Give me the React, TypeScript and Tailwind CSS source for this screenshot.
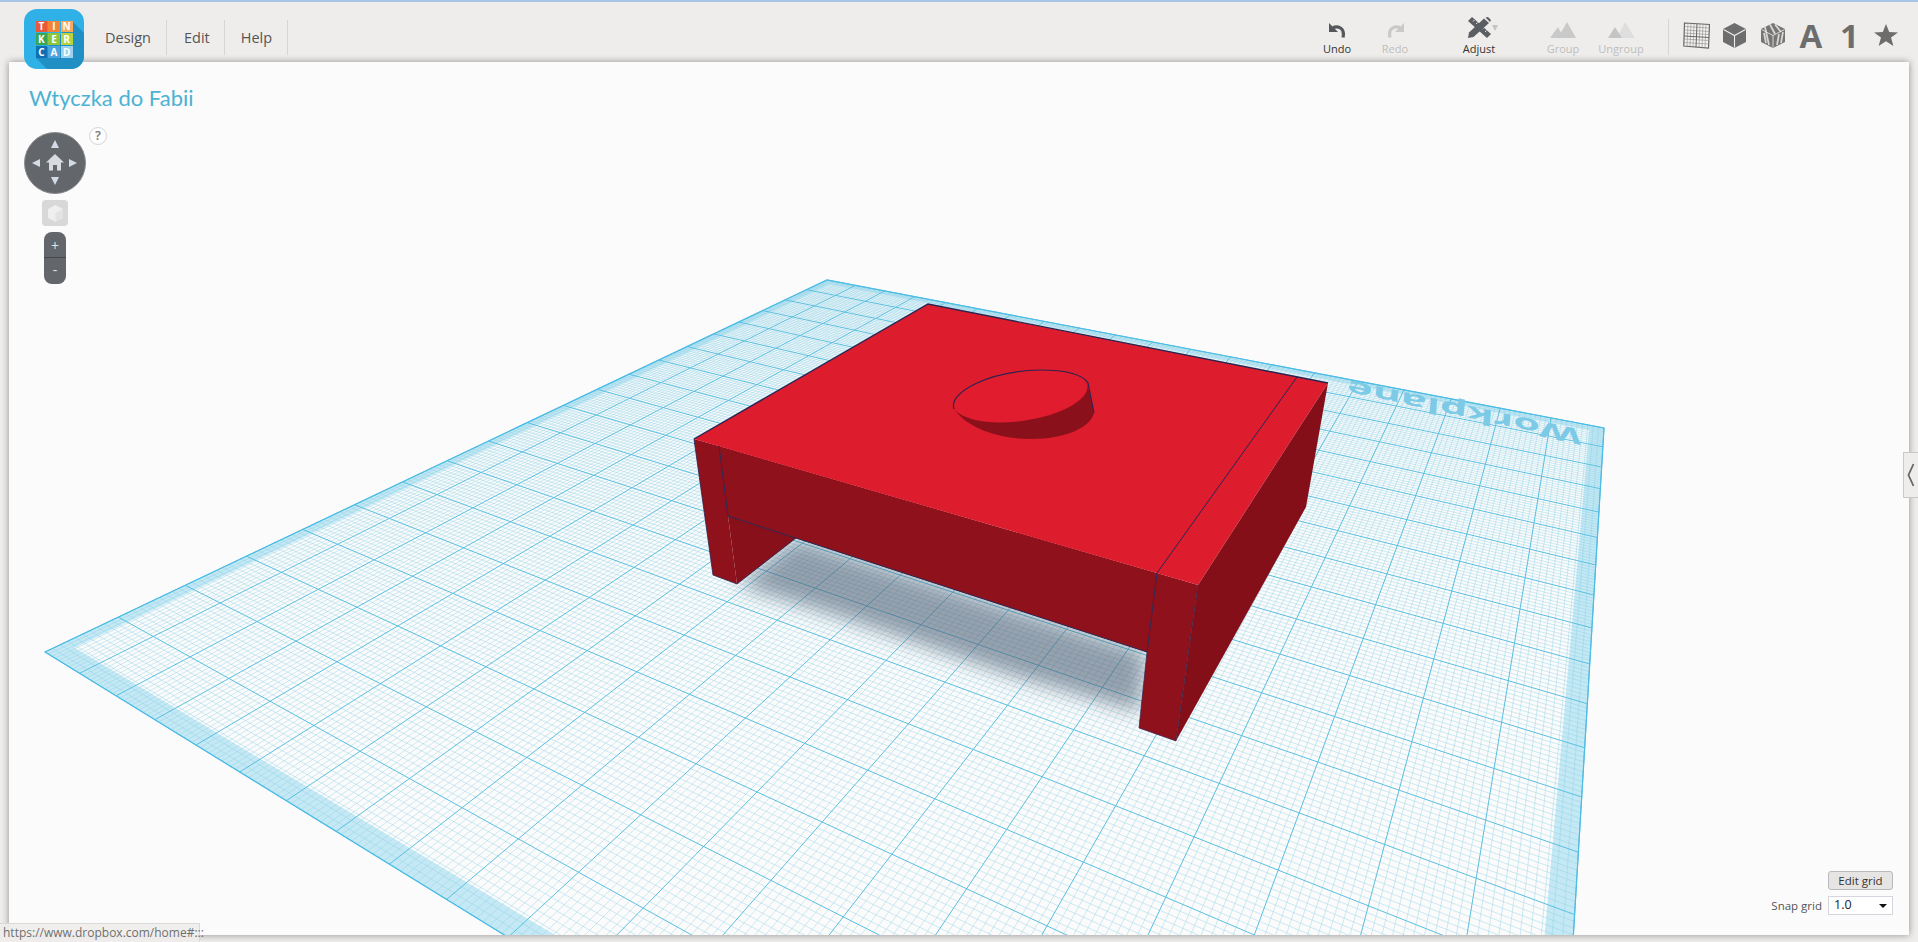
import type { ReactNode } from "react";

// workplane corners on the page, found from the grid ticks in the screenshot
const P00 = [45, 652];
const P10 = [1535, 1570];
const P01 = [827, 280];
const P11 = [1604, 428];

function makeProjector() {
  const dx1 = P10[0] - P11[0];
  const dx2 = P01[0] - P11[0];
  const sx = P00[0] - P10[0] + P11[0] - P01[0];
  const dy1 = P10[1] - P11[1];
  const dy2 = P01[1] - P11[1];
  const sy = P00[1] - P10[1] + P11[1] - P01[1];
  const det = dx1 * dy2 - dx2 * dy1;
  const g = (sx * dy2 - dx2 * sy) / det;
  const h = (dx1 * sy - sx * dy1) / det;
  return (s: number, t: number) => {
    const w = 1 + g * s + h * t;
    const x = ((P10[0] * (1 + g) - P00[0]) * s + (P01[0] * (1 + h) - P00[0]) * t + P00[0]) / w;
    const y = ((P10[1] * (1 + g) - P00[1]) * s + (P01[1] * (1 + h) - P00[1]) * t + P00[1]) / w;
    return `${x.toFixed(1)} ${y.toFixed(1)}`;
  };
}

const project = makeProjector();

function gridPath(step: number, skip: number) {
  let d = "";
  for (let i = 0; i <= 200; i += step) {
    if (skip && i % skip === 0) continue;
    const k = i / 200;
    d += `M${project(k, 0)}L${project(k, 1)}M${project(0, k)}L${project(1, k)}`;
  }
  return d;
}

const band = 0.0135;
const bandPath =
  `M${project(0, 0)}L${project(1, 0)}L${project(1, 1)}L${project(0, 1)}Z` +
  `M${project(band, band)}L${project(1 - band, band)}L${project(1 - band, 1 - band)}L${project(band, 1 - band)}Z`;

function Scene() {
  return (
    <svg className="absolute inset-0" width="1900" height="873" viewBox="9 62 1900 873">
      <defs>
        <filter id="soft" x="-20%" y="-20%" width="140%" height="140%">
          <feGaussianBlur stdDeviation="10" />
        </filter>
      </defs>
      {/* workplane */}
      <path d={bandPath} fill="#c4e8f4" fillRule="evenodd" />
      <path d={gridPath(1, 10)} fill="none" stroke="#8fd0e6" strokeOpacity="0.55" strokeWidth="0.8" />
      <path d={gridPath(10, 0)} fill="none" stroke="#59bfe0" strokeWidth="1" />
      <path
        d={`M${project(0, 0)}L${project(1, 0)}L${project(1, 1)}L${project(0, 1)}Z`}
        fill="none"
        stroke="#4dbde6"
        strokeWidth="1.2"
      />
      <text
        transform="matrix(-2.15 -0.46 0.1 -1.05 1582 430)"
        fontFamily="'Open Sans', sans-serif"
        fontWeight="700"
        fontSize="20"
        fill="#7ccae6"
      >
        Workplane
      </text>

      {/* shadow on the plane */}
      <polygon
        points="738,585 796,538 1147,652 1140,712 1017,677 838,616"
        fill="#4d5f75"
        fillOpacity="0.58"
        filter="url(#soft)"
      />

      {/* legs, underside */}
      <polygon points="728,516 796,538 737,584" fill="#87101a" />
      <polygon points="1198,585 1328,383 1306,507 1176,741" fill="#850f18" />
      {/* front band */}
      <polygon points="719,446 1157,573 1147,652 728,516" fill="#8f111c" />
      <polygon points="694,439 719,446 728,516 737,584 713,575" fill="#8f111c" />
      <polygon points="1157,573 1198,585 1176,741 1139,728 1147,652" fill="#8f111c" />
      {/* top */}
      <polygon points="928,304 1328,383 1198,585 694,439" fill="#dd1c2e" />

      {/* peg */}
      <path d="M954,408 C965,428 1000,439 1030,439 C1065,439 1090,428 1094,413 L1087,383 Z" fill="#8a111b" />
      <ellipse cx="1020" cy="395" rx="68" ry="26" transform="rotate(-8 1020 395)" fill="#e01c2e" />
      <path
        d="M954,409 C948,392 990,371 1040,370 C1065,370 1082,374 1088,383 L1094,413"
        fill="none"
        stroke="#2b2350"
        strokeWidth="1.2"
      />

      {/* edges */}
      <g fill="none" stroke="#2b2350" strokeWidth="1">
        <path d="M694,439 L928,304 L1328,383" strokeWidth="1.4" />
        <path d="M1297,377 L1157,573 L1147,652" />
        <path d="M719,446 L728,516 L1147,652" />
        <path d="M694,439 L713,575 L737,584 L796,538" strokeOpacity="0.8" />
        <path d="M1147,652 L1139,728 L1176,741 L1198,585" strokeOpacity="0.7" />
      </g>
    </svg>
  );
}

function LogoCell({ letter, color }: { letter: string; color: string }) {
  return (
    <div
      className="flex items-center justify-center font-['Open_Sans',sans-serif] text-[10px] font-bold leading-none text-white"
      style={{ backgroundColor: color }}
    >
      {letter}
    </div>
  );
}

function Logo() {
  const cells = [
    ["T", "#e9583a"],
    ["I", "#f2843a"],
    ["N", "#f7a95c"],
    ["K", "#3aa655"],
    ["E", "#8cc63f"],
    ["R", "#b7d33f"],
    ["C", "#0f6fb5"],
    ["A", "#4aa3df"],
    ["D", "#9dd1ee"],
  ];
  return (
    <div className="relative z-10 mt-[7px] ml-6 flex h-[60px] w-[60px] shrink-0 items-center justify-center overflow-hidden rounded-[13px] bg-[#2fb0e6]">
      <svg className="absolute inset-0" width="60" height="60" viewBox="0 0 60 60">
        <polygon points="12,49 49,13 60,24 60,60 23,60" fill="#1f8fc4" />
      </svg>
      <div className="relative grid h-[37px] w-[37px] grid-cols-3 gap-px">
        {cells.map(([l, c]) => (
          <LogoCell key={l} letter={l} color={c} />
        ))}
      </div>
    </div>
  );
}

function MenuItem({ label, className }: { label: string; className: string }) {
  return (
    <div className={`mt-[18px] flex h-[35px] items-center border-r border-[#d8d6d3] text-[14.5px] text-[#555] ${className}`}>
      {label}
    </div>
  );
}

function ToolButton({ label, disabled, className, children }: { label: string; disabled?: boolean; className?: string; children: ReactNode }) {
  return (
    <div className={`flex w-[58px] flex-col items-center ${className ?? ""}`}>
      <div className="flex h-[21px] items-end">{children}</div>
      <div className={`mt-[4px] text-[11px] leading-[14px] ${disabled ? "text-[#bdbdbd]" : "text-[#333]"}`}>{label}</div>
    </div>
  );
}

function UndoIcon({ color, flip }: { color: string; flip?: boolean }) {
  return (
    <svg width="17" height="15" viewBox="0 0 17 15" className={flip ? "-scale-x-100" : ""}>
      <polygon points="0,0 0,9 9,9" fill={color} />
      <path d="M4,4.5 C10,2.5 16,5.5 14,14.5" fill="none" stroke={color} strokeWidth="3.2" />
    </svg>
  );
}

function AdjustIcon() {
  return (
    <svg width="23" height="21" viewBox="0 0 23 21" className="overflow-visible">
      {/* ruler */}
      <polygon points="0,4 4,0 23,17 19,21" fill="#5a5d61" />
      <path d="M5,4.5 L6.5,3 M8,7 L9.5,5.5 M11,9.7 L12.5,8.2 M14,12.4 L15.5,10.9 M17,15 L18.5,13.5" stroke="#efedeb" strokeWidth="0.9" />
      {/* pencil */}
      <polygon points="0,21 1,15.5 16,1.5 21,6 5.5,20" fill="#5a5d61" />
      <polygon points="17.5,0.5 20,0 23,3 22,5" fill="#5a5d61" />
      <polygon points="24,8 30,8 27,14" fill="#c4c4c4" />
    </svg>
  );
}

function GroupIcon() {
  return (
    <svg width="26" height="16" viewBox="0 0 26 16">
      <polygon points="0,16 8,5 14,16" fill="#c9c9c9" />
      <polygon points="8,16 17,0 26,16" fill="#c9c9c9" />
    </svg>
  );
}

function UngroupIcon() {
  return (
    <svg width="27" height="16" viewBox="0 0 27 16">
      <polygon points="9,16 17,0 27,16" fill="#dedede" />
      <polygon points="0,16 7,5 14,16" fill="#c4c4c4" />
    </svg>
  );
}

function GridIcon() {
  return (
    <svg width="27" height="27" viewBox="0 0 27 27">
      <polygon points="1.5,1 26.5,2.5 25.5,26 0.8,24" fill="#f4f2f0" stroke="#666" strokeWidth="1.2" />
      <path
        d="M5,1.2 L4,24.3 M8,1.4 L7,24.5 M11,1.6 L10,24.8 M17,2 L16,25.2 M20,2.2 L19,25.5 M23,2.4 L22,25.7 M1.4,4.5 L26.4,6 M1.3,8 L26.2,9.5 M1.2,11 L26.1,12.5 M1.1,17 L25.9,18.5 M1,20.5 L25.7,22"
        stroke="#8b8b8b"
        strokeWidth="0.6"
      />
      <path d="M14,1.8 L13,25 M1.2,14 L26,15.5" stroke="#666" strokeWidth="1" />
    </svg>
  );
}

function BoxIcon() {
  return (
    <svg width="23" height="25" viewBox="0 0 23 25">
      <polygon points="11.5,0 23,6 23,19 11.5,25 0,19 0,6" fill="#6d6d6d" />
      <path d="M0.5,6.5 L11.5,12.5 L22.5,6.5 M11.5,12.5 L11.5,24.5" fill="none" stroke="#efedeb" strokeWidth="1.1" />
    </svg>
  );
}

function StripedBoxIcon() {
  return (
    <svg width="24" height="25" viewBox="0 0 24 25">
      <polygon points="12,0 24,6 24,19 12,25 0,19 0,6" fill="#757575" />
      <path d="M4,4 L8,22 M9,1.5 L14,11 M14,1.5 L20,9 M18,11 L16,22 M22,9 L20,20 M3,10 L5,20" stroke="#d8d6d4" strokeWidth="1.8" fill="none" />
      <path d="M0.5,6.5 L12,12.5 L23.5,6.5 M12,12.5 L12,24.5" fill="none" stroke="#efedeb" strokeWidth="0.8" />
    </svg>
  );
}

function Compass() {
  return (
    <div className="absolute top-[70px] left-[15px] h-[62px] w-[62px] rounded-full border border-[#8a8c90] bg-[#63666b]">
      <svg width="60" height="60" viewBox="0 0 60 60">
        <polygon points="30,7 26,15 34,15" fill="#d3dce6" />
        <polygon points="30,52 26,44 34,44" fill="#d3dce6" />
        <polygon points="7,30 15,26 15,34" fill="#d3dce6" />
        <polygon points="52,30 44,26 44,34" fill="#d3dce6" />
        <polygon points="30,21 21,29.5 24,29.5 24,37.5 28,37.5 28,32 32,32 32,37.5 36,37.5 36,29.5 39,29.5" fill="#d9dcdf" />
      </svg>
    </div>
  );
}

export default function App() {
  return (
    <div className="relative flex h-[942px] w-[1918px] flex-col overflow-hidden border-t-2 border-[#a9c6e4] bg-[#efedeb] font-['Open_Sans',sans-serif]">
      <header className="flex h-[60px] shrink-0">
        <Logo />
        <MenuItem label="Design" className="pr-[15px] pl-[21px]" />
        <MenuItem label="Edit" className="pr-[14px] pl-[17px]" />
        <MenuItem label="Help" className="pr-[15px] pl-[16px]" />

        <div className="ml-auto flex items-start pt-[15px] pr-5">
          <ToolButton label="Undo">
            <UndoIcon color="#54585c" />
          </ToolButton>
          <ToolButton label="Redo" disabled>
            <UndoIcon color="#c9c9c9" flip />
          </ToolButton>
          <ToolButton label="Adjust" className="ml-[26px]">
            <AdjustIcon />
          </ToolButton>
          <ToolButton label="Group" disabled className="ml-[26px]">
            <GroupIcon />
          </ToolButton>
          <ToolButton label="Ungroup" disabled>
            <UngroupIcon />
          </ToolButton>
          <div className="mt-[2px] ml-[18px] h-[36px] w-px bg-[#d8d6d3]" />
          <div className="ml-[14px] flex h-[36px] items-center text-[#6d6d6d]">
            <GridIcon />
            <div className="ml-[13px]">
              <BoxIcon />
            </div>
            <div className="ml-[15px]">
              <StripedBoxIcon />
            </div>
            <div className="ml-[14px] w-[24px] text-center text-[33px] leading-none font-bold">A</div>
            <div className="ml-[17px] w-[12px] text-center text-[33px] leading-none font-bold">1</div>
            <svg className="ml-[22px]" width="24" height="22" viewBox="0 0 24 22">
              <polygon points="12,0 15.2,8 24,8.4 17,13.6 19.4,22 12,17.2 4.6,22 7,13.6 0,8.4 8.8,8" fill="#6d6d6d" />
            </svg>
          </div>
        </div>
      </header>

      <main className="relative mx-[9px] h-[873px] shrink-0 overflow-hidden bg-[#fbfbfb] shadow-[0_0_7px_rgba(0,0,0,0.4)]">
        <Scene />
        <h1 className="relative pt-[22px] pl-[20px] font-['Lato',sans-serif] text-[22px] leading-[28px] font-normal text-[#4bb2d3]">
          Wtyczka do Fabii
        </h1>

        <Compass />
        <div className="absolute top-[65px] left-[80px] flex h-[18px] w-[18px] items-center justify-center rounded-full border border-[#d5d5d5] bg-white text-[13px] font-semibold text-[#777]">
          ?
        </div>
        <div className="absolute top-[138px] left-[33px] flex h-[26px] w-[26px] items-center justify-center rounded-[4px] bg-[#d8d8d8]">
          <svg width="15" height="17" viewBox="0 0 15 17">
            <polygon points="7.5,0 15,4 15,13 7.5,17 0,13 0,4" fill="#efefef" />
            <polygon points="7.5,8 15,4 15,13 7.5,17" fill="#e3e3e3" />
          </svg>
        </div>
        <div className="absolute top-[170px] left-[35px] flex h-[52px] w-[22px] flex-col rounded-[8px] bg-[#63666b] text-[14px] leading-none text-[#dfe3e8]">
          <div className="flex h-[26px] items-center justify-center border-b border-[#45484c] pt-[3px]">+</div>
          <div className="flex h-[26px] items-center justify-center pb-[2px]">-</div>
        </div>

        <div className="absolute top-[809px] right-[16px] flex flex-col items-end gap-[6px]">
          <button className="h-[19px] w-[65px] rounded-[3px] border border-[#b9b9b9] bg-[#e6e5e4] text-[11.5px] leading-none text-[#333]">
            Edit grid
          </button>
          <div className="flex items-center">
            <span className="mr-[6px] text-[11.5px] text-[#555]">Snap grid</span>
            <div className="flex h-[19px] w-[65px] items-center justify-between border border-[#d5d5dd] bg-white pr-[5px] pl-[5px] text-[12.5px] text-[#222]">
              1.0
              <svg width="8" height="4" viewBox="0 0 8 4">
                <polygon points="0,0 8,0 4,4" fill="#111" />
              </svg>
            </div>
          </div>
        </div>
      </main>

      {/* collapsed side panel tab */}
      <div className="absolute top-[450px] right-0 flex h-[46px] w-[15px] items-center justify-center border border-r-0 border-[#c9c9c9] bg-[#efedeb]">
        <svg width="8" height="24" viewBox="0 0 8 24">
          <path d="M6.5,1 L1.5,12 L6.5,23" fill="none" stroke="#666" strokeWidth="1.8" />
        </svg>
      </div>

      {/* browser status bubble */}
      <div className="absolute bottom-0 left-0 flex h-[19px] w-[200px] items-center border-t border-r border-[#d9d9d9] bg-[#efedeb]/90 pl-[3px] text-[12px] whitespace-nowrap text-[#6f6f6f]">
        https://www.dropbox.com/home#:::
      </div>
    </div>
  );
}
